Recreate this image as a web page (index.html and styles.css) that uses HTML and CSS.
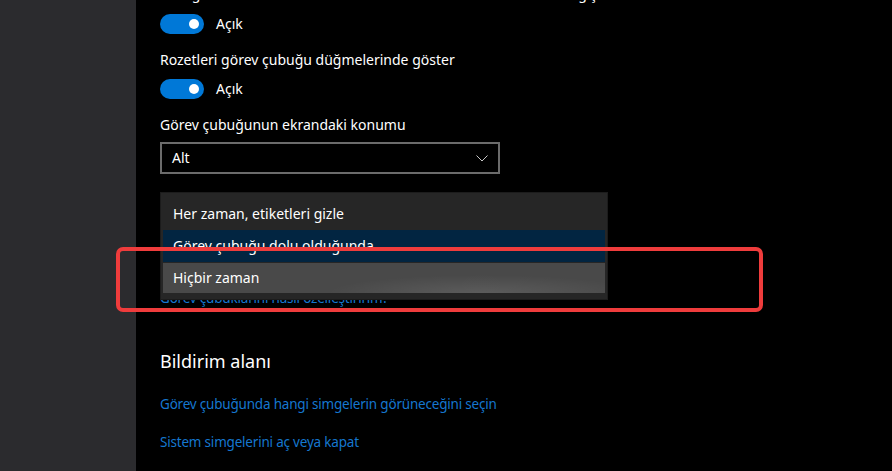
FILE: index.html
```html
<!DOCTYPE html>
<html lang="tr">
<head>
<meta charset="utf-8">
<title>Görev çubuğu</title>
<link rel="stylesheet" href="styles.css">
</head>
<body>
<div class="window">
  <aside class="sidebar"></aside>
  <main class="content">
    <p class="label cut">Başlat düğmesine sağ tıkladığımda veya Windows tuşu+X'e<br>bastığımda menüde Komut İstemi'ni Windows PowerShell ile değiştir</p>
    <div class="toggle-row"><span class="toggle"><span class="knob"></span></span><span class="state">Açık</span></div>
    <p class="label">Rozetleri görev çubuğu düğmelerinde göster</p>
    <div class="toggle-row gap-top"><span class="toggle"><span class="knob"></span></span><span class="state">Açık</span></div>
    <p class="label">Görev çubuğunun ekrandaki konumu</p>
    <div class="select"><span>Alt</span><svg class="chev" width="12" height="7" viewBox="0 0 12 7"><path d="M0.5 0.5 L6 6 L11.5 0.5" fill="none" stroke="#c8c8c8" stroke-width="1"/></svg></div>
    <a class="link help" href="#">Görev çubuklarını nasıl özelleştiririm?</a>
    <h2 class="section">Bildirim alanı</h2>
    <a class="link first" href="#">Görev çubuğunda hangi simgelerin görüneceğini seçin</a>
    <a class="link second" href="#">Sistem simgelerini aç veya kapat</a>

    <ul class="menu">
      <li class="item">Her zaman, etiketleri gizle</li>
      <li class="item selected">Görev çubuğu dolu olduğunda</li>
      <li class="item hover">Hiçbir zaman</li>
    </ul>
  </main>
  <div class="annotation"></div>
</div>
</body>
</html>
```

FILE: styles.css
```css
html, body {
  margin: 0;
  padding: 0;
  background: #000;
}

body {
  width: 892px;
  height: 471px;
  overflow: hidden;
  font-family: "Noto Sans", "Open Sans", sans-serif;
  font-size: 14px;
  color: #fff;
}

.window {
  position: relative;
  display: flex;
  width: 892px;
  height: 471px;
  overflow: hidden;
}

.sidebar {
  flex: 0 0 136px;
  background: #2b2b2e;
}

.content {
  position: relative;
  flex: 1;
  padding-left: 24px;
  display: flex;
  flex-direction: column;
  align-items: flex-start;
}

.label {
  margin: 16px 0 0;
  line-height: 20px;
  white-space: nowrap;
}

.cut {
  margin-top: -36px;
}

.toggle-row {
  display: flex;
  align-items: center;
  gap: 12px;
  height: 20px;
  margin-top: 10px;
}

.toggle-row.gap-top {
  margin-top: 9px;
}

.toggle {
  display: flex;
  justify-content: flex-end;
  align-items: center;
  box-sizing: border-box;
  width: 44px;
  height: 20px;
  padding-right: 5px;
  border-radius: 10px;
  background: #0078d7;
}

.knob {
  width: 10px;
  height: 10px;
  border-radius: 50%;
  background: #fff;
}

.state {
  line-height: 20px;
}

.select {
  box-sizing: border-box;
  display: flex;
  align-items: center;
  justify-content: space-between;
  width: 340px;
  height: 32px;
  margin-top: 7px;
  padding: 0 10px 0 10px;
  border: 2px solid #6b6b6b;
  line-height: 20px;
}

.chev {
  display: block;
}

.link {
  display: block;
  color: #1577cf;
  text-decoration: none;
  font-size: 13.5px;
  letter-spacing: -0.2px;
  line-height: 20px;
  white-space: nowrap;
}

.help {
  margin-top: 114px;
}

.section {
  margin: 41px 0 0;
  font-size: 18px;
  font-weight: 400;
  line-height: 24px;
}

.first {
  margin-top: 21px;
}

.second {
  margin-top: 18px;
}

.menu {
  position: absolute;
  left: 24px;
  top: 192px;
  box-sizing: border-box;
  width: 448px;
  margin: 0;
  padding: 5px 2px 6px;
  list-style: none;
  background: #262626;
  border: 1px solid #1c1c1c;
}

.item {
  box-sizing: border-box;
  height: 32px;
  padding-left: 10px;
  display: flex;
  align-items: center;
  line-height: 20px;
}

.item.selected {
  background: #022541;
}

.item.hover {
  height: 30px;
  margin-top: 1px;
  background:
    radial-gradient(ellipse 35% 60% at 72% 100%, rgba(255,255,255,0.10), rgba(255,255,255,0) 100%),
    #494949;
}

.annotation {
  position: absolute;
  left: 116px;
  top: 247px;
  box-sizing: border-box;
  width: 647px;
  height: 65px;
  border: 4px solid #ef3c3c;
  border-radius: 7px;
  z-index: 5;
}
```
